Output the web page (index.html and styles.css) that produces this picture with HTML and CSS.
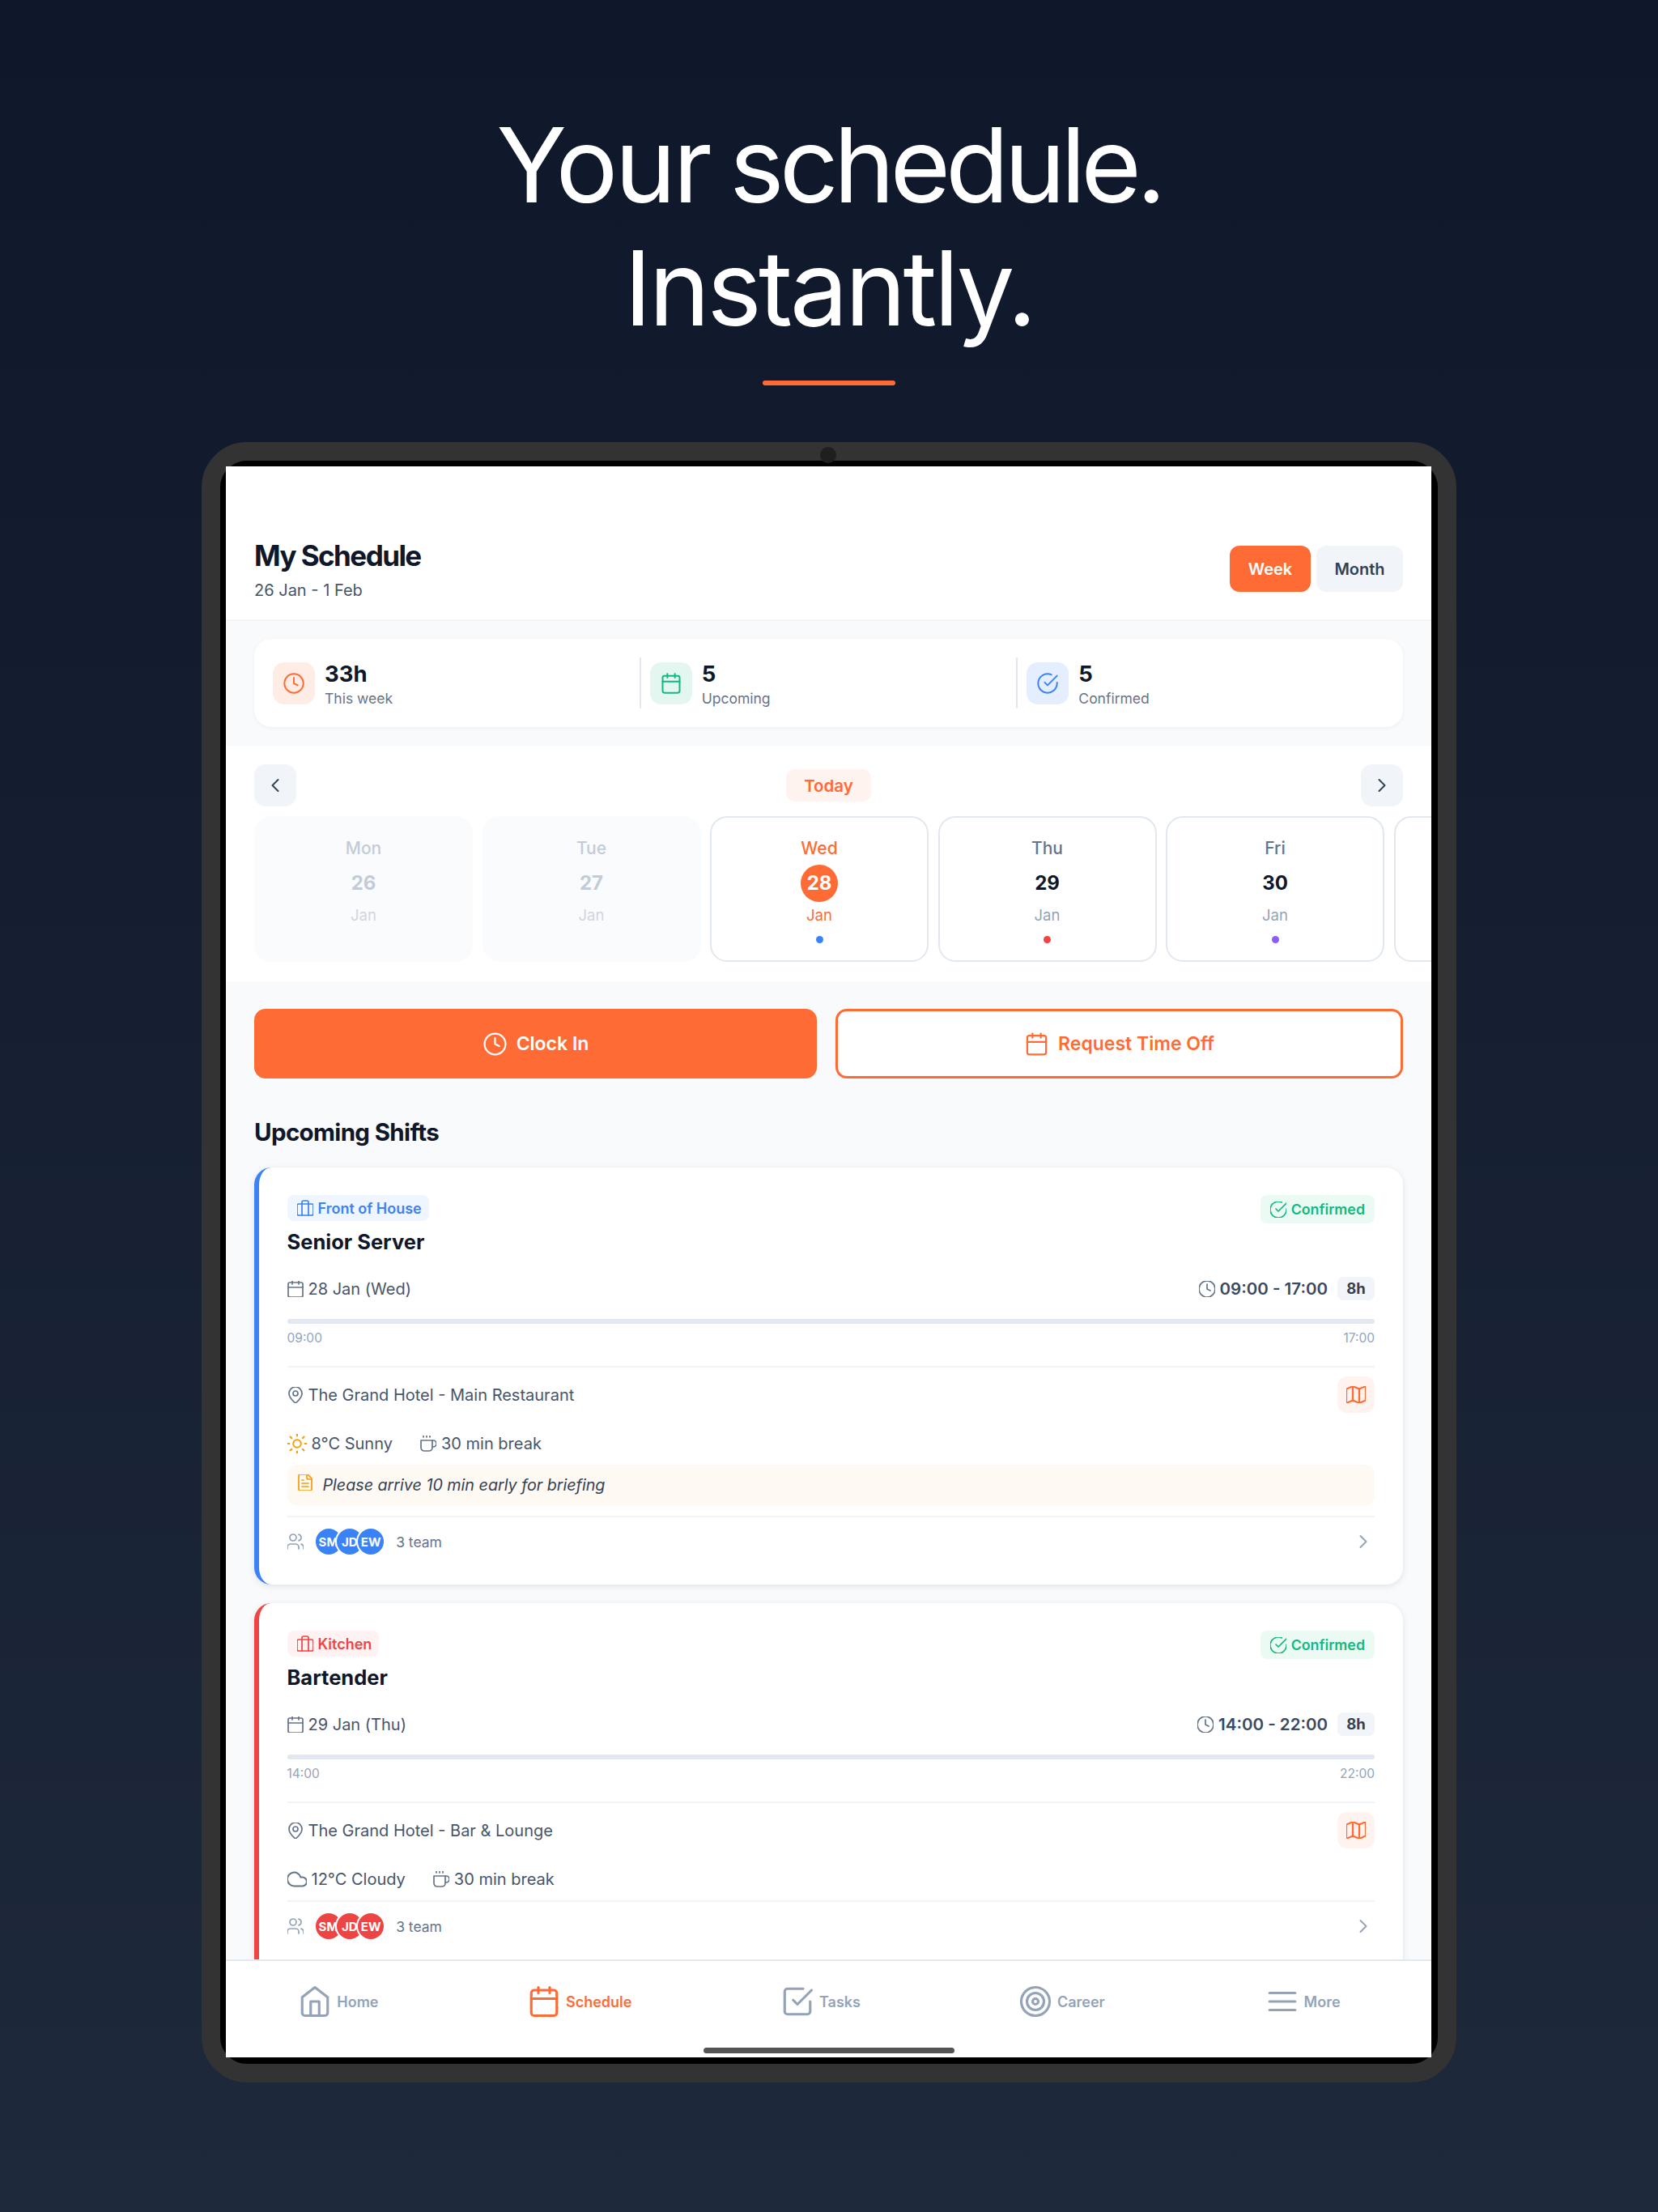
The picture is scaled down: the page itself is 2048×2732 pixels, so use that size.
FILE: index.html
```html
<!DOCTYPE html>
<html lang="en">
<head>
    <meta charset="UTF-8">
    <meta name="viewport" content="width=device-width, initial-scale=1.0">
    <title>Your schedule. Instantly.</title>
    <link rel="stylesheet" href="styles.css">
</head>
<body>
    <!-- icon set -->
    <svg class="sprite" xmlns="http://www.w3.org/2000/svg">
        <defs>
            <g id="i-clock"><circle cx="12" cy="12" r="10"/><polyline points="12 6 12 12 16 14"/></g>
            <g id="i-calendar"><rect x="3" y="4" width="18" height="18" rx="2"/><line x1="16" y1="2" x2="16" y2="6"/><line x1="8" y1="2" x2="8" y2="6"/><line x1="3" y1="10" x2="21" y2="10"/></g>
            <g id="i-check"><path d="M22 11.08V12a10 10 0 1 1-5.93-9.14"/><polyline points="22 4 12 14.01 9 11.01"/></g>
            <g id="i-left"><polyline points="15 18 9 12 15 6"/></g>
            <g id="i-right"><polyline points="9 18 15 12 9 6"/></g>
            <g id="i-case"><rect x="2" y="7" width="20" height="14" rx="2"/><path d="M16 21V5a2 2 0 0 0-2-2h-4a2 2 0 0 0-2 2v16"/></g>
            <g id="i-pin"><path d="M20 10c0 6-8 12-8 12s-8-6-8-12a8 8 0 0 1 16 0Z"/><circle cx="12" cy="10" r="3"/></g>
            <g id="i-sun"><circle cx="12" cy="12" r="4"/><path d="M12 2v2M12 20v2M4.93 4.93l1.41 1.41M17.66 17.66l1.41 1.41M2 12h2M20 12h2M6.34 17.66l-1.41 1.41M19.07 4.93l-1.41 1.41"/></g>
            <g id="i-cloud"><path d="M17.5 19H9a7 7 0 1 1 6.71-9h1.79a4.5 4.5 0 1 1 0 9Z"/></g>
            <g id="i-coffee"><path d="M17 8h1a4 4 0 1 1 0 8h-1"/><path d="M3 8h14v9a4 4 0 0 1-4 4H7a4 4 0 0 1-4-4Z"/><line x1="6" y1="2" x2="6" y2="4"/><line x1="10" y1="2" x2="10" y2="4"/><line x1="14" y1="2" x2="14" y2="4"/></g>
            <g id="i-map"><polygon points="3 6 9 3 15 6 21 3 21 18 15 21 9 18 3 21"/><line x1="9" y1="3" x2="9" y2="18"/><line x1="15" y1="6" x2="15" y2="21"/></g>
            <g id="i-note"><path d="M15 2H6a2 2 0 0 0-2 2v16a2 2 0 0 0 2 2h12a2 2 0 0 0 2-2V7Z"/><path d="M14 2v4a2 2 0 0 0 2 2h4"/><path d="M10 9H8"/><path d="M16 13H8"/><path d="M16 17H8"/></g>
            <g id="i-users"><path d="M16 21v-2a4 4 0 0 0-4-4H6a4 4 0 0 0-4 4v2"/><circle cx="9" cy="7" r="4"/><path d="M22 21v-2a4 4 0 0 0-3-3.87"/><path d="M16 3.13a4 4 0 0 1 0 7.75"/></g>
            <g id="i-home"><path d="M3 9l9-7 9 7v11a2 2 0 0 1-2 2H5a2 2 0 0 1-2-2z"/><polyline points="9 22 9 12 15 12 15 22"/></g>
            <g id="i-task"><polyline points="9 11 12 14 22 4"/><path d="M21 12v7a2 2 0 0 1-2 2H5a2 2 0 0 1-2-2V5a2 2 0 0 1 2-2h11"/></g>
            <g id="i-target"><circle cx="12" cy="12" r="10"/><circle cx="12" cy="12" r="6"/><circle cx="12" cy="12" r="2"/></g>
            <g id="i-menu"><line x1="3" y1="6" x2="21" y2="6"/><line x1="3" y1="12" x2="21" y2="12"/><line x1="3" y1="18" x2="21" y2="18"/></g>
        </defs>
    </svg>

    <!-- headline -->
    <h1 class="headline">Your <span class="tight">schedule.</span><br>Instantly.</h1>
    <div class="accent"></div>

    <!-- tablet -->
    <div class="device">
        <span class="camera"></span>
        <div class="screen">
            <header class="topbar">
                <div>
                    <h2 class="page-title">My Schedule</h2>
                    <p class="page-sub">26 Jan - 1 Feb</p>
                </div>
                <div class="view-toggle">
                    <button class="view-btn active">Week</button>
                    <button class="view-btn">Month</button>
                </div>
            </header>

            <main class="content">
                <section class="stats-band">
                    <div class="stats-card">
                        <div class="stat">
                            <span class="stat-icon orange"><svg class="ic stat-svg" viewBox="0 0 24 24"><use href="#i-clock"/></svg></span>
                            <div><div class="stat-value">33h</div><div class="stat-label">This week</div></div>
                        </div>
                        <span class="stat-divider"></span>
                        <div class="stat">
                            <span class="stat-icon green"><svg class="ic stat-svg" viewBox="0 0 24 24"><use href="#i-calendar"/></svg></span>
                            <div><div class="stat-value">5</div><div class="stat-label">Upcoming</div></div>
                        </div>
                        <span class="stat-divider"></span>
                        <div class="stat">
                            <span class="stat-icon blue"><svg class="ic stat-svg" viewBox="0 0 24 24"><use href="#i-check"/></svg></span>
                            <div><div class="stat-value">5</div><div class="stat-label">Confirmed</div></div>
                        </div>
                    </div>
                </section>

                <section class="calendar">
                    <div class="cal-nav">
                        <button class="cal-arrow"><svg class="ic chevron" viewBox="0 0 24 24"><use href="#i-left"/></svg></button>
                        <span class="today-pill">Today</span>
                        <button class="cal-arrow"><svg class="ic chevron" viewBox="0 0 24 24"><use href="#i-right"/></svg></button>
                    </div>
                    <div class="days">
                        <div class="day past"><span class="day-name">Mon</span><span class="day-num">26</span><span class="day-month">Jan</span></div>
                        <div class="day past"><span class="day-name">Tue</span><span class="day-num">27</span><span class="day-month">Jan</span></div>
                        <div class="day today"><span class="day-name">Wed</span><span class="day-num">28</span><span class="day-month">Jan</span><span class="day-dot dot-blue"></span></div>
                        <div class="day"><span class="day-name">Thu</span><span class="day-num">29</span><span class="day-month">Jan</span><span class="day-dot dot-red"></span></div>
                        <div class="day"><span class="day-name">Fri</span><span class="day-num">30</span><span class="day-month">Jan</span><span class="day-dot dot-purple"></span></div>
                        <div class="day"></div>
                    </div>
                </section>

                <section class="shifts">
                    <div class="actions">
                        <button class="action primary"><svg class="ic action-svg" viewBox="0 0 24 24"><use href="#i-clock"/></svg>Clock In</button>
                        <button class="action outline"><svg class="ic action-svg" viewBox="0 0 24 24"><use href="#i-calendar"/></svg>Request Time Off</button>
                    </div>

                    <h3 class="section-title">Upcoming Shifts</h3>

                    <article class="shift-card foh">
                        <div class="shift-head">
                            <div>
                                <span class="dept"><svg class="ic small" viewBox="2 2 20 20"><use href="#i-case"/></svg>Front of House</span>
                                <h4 class="role">Senior Server</h4>
                            </div>
                            <span class="status"><svg class="ic small" viewBox="2 2 20 20"><use href="#i-check"/></svg>Confirmed</span>
                        </div>
                        <div class="when">
                            <span class="info"><svg class="ic small" viewBox="2 2 20 20"><use href="#i-calendar"/></svg>28 Jan (Wed)</span>
                            <div class="hours">
                                <span class="time"><svg class="ic small" viewBox="2 2 20 20"><use href="#i-clock"/></svg>09:00 - 17:00</span>
                                <span class="duration">8h</span>
                            </div>
                        </div>
                        <div class="bar"></div>
                        <div class="bar-labels"><span>09:00</span><span>17:00</span></div>
                        <div class="place">
                            <span class="info"><svg class="ic small" viewBox="2 2 20 20"><use href="#i-pin"/></svg>The Grand Hotel - Main Restaurant</span>
                            <button class="map-btn"><svg class="ic map-svg" viewBox="3 3 18 18" preserveAspectRatio="none"><use href="#i-map"/></svg></button>
                        </div>
                        <div class="extras">
                            <span class="info"><svg class="ic weather sunny" viewBox="2 2 20 20"><use href="#i-sun"/></svg>8°C Sunny</span>
                            <span class="info"><svg class="ic small" viewBox="2 2 20 20"><use href="#i-coffee"/></svg>30 min break</span>
                        </div>
                        <div class="note"><svg class="ic small" viewBox="2 2 20 20"><use href="#i-note"/></svg><em>Please arrive 10 min early for briefing</em></div>
                        <div class="shift-foot">
                            <svg class="ic small team-icon" viewBox="2 2 20 20"><use href="#i-users"/></svg>
                            <div class="avatars"><span>SM</span><span>JD</span><span>EW</span></div>
                            <span class="team-count">3 team</span>
                            <svg class="ic chevron go" viewBox="0 0 24 24"><use href="#i-right"/></svg>
                        </div>
                    </article>

                    <article class="shift-card kitchen">
                        <div class="shift-head">
                            <div>
                                <span class="dept"><svg class="ic small" viewBox="2 2 20 20"><use href="#i-case"/></svg>Kitchen</span>
                                <h4 class="role">Bartender</h4>
                            </div>
                            <span class="status"><svg class="ic small" viewBox="2 2 20 20"><use href="#i-check"/></svg>Confirmed</span>
                        </div>
                        <div class="when">
                            <span class="info"><svg class="ic small" viewBox="2 2 20 20"><use href="#i-calendar"/></svg>29 Jan (Thu)</span>
                            <div class="hours">
                                <span class="time"><svg class="ic small" viewBox="2 2 20 20"><use href="#i-clock"/></svg>14:00 - 22:00</span>
                                <span class="duration">8h</span>
                            </div>
                        </div>
                        <div class="bar"></div>
                        <div class="bar-labels"><span>14:00</span><span>22:00</span></div>
                        <div class="place">
                            <span class="info"><svg class="ic small" viewBox="2 2 20 20"><use href="#i-pin"/></svg>The Grand Hotel - Bar &amp; Lounge</span>
                            <button class="map-btn"><svg class="ic map-svg" viewBox="3 3 18 18" preserveAspectRatio="none"><use href="#i-map"/></svg></button>
                        </div>
                        <div class="extras">
                            <span class="info"><svg class="ic weather" viewBox="2 2 20 20"><use href="#i-cloud"/></svg>12°C Cloudy</span>
                            <span class="info"><svg class="ic small" viewBox="2 2 20 20"><use href="#i-coffee"/></svg>30 min break</span>
                        </div>
                        <div class="shift-foot">
                            <svg class="ic small team-icon" viewBox="2 2 20 20"><use href="#i-users"/></svg>
                            <div class="avatars"><span>SM</span><span>JD</span><span>EW</span></div>
                            <span class="team-count">3 team</span>
                            <svg class="ic chevron go" viewBox="0 0 24 24"><use href="#i-right"/></svg>
                        </div>
                    </article>
                </section>
            </main>

            <nav class="tabbar">
                <a class="tab"><svg class="ic tab-svg" viewBox="0 0 24 24"><use href="#i-home"/></svg>Home</a>
                <a class="tab active"><svg class="ic tab-svg" viewBox="0 0 24 24"><use href="#i-calendar"/></svg>Schedule</a>
                <a class="tab"><svg class="ic tab-svg" viewBox="0 0 24 24"><use href="#i-task"/></svg>Tasks</a>
                <a class="tab"><svg class="ic tab-svg" viewBox="0 0 24 24"><use href="#i-target"/></svg>Career</a>
                <a class="tab"><svg class="ic tab-svg" viewBox="0 0 24 24"><use href="#i-menu"/></svg>More</a>
            </nav>
            <span class="home-bar"></span>
        </div>
    </div>
</body>
</html>
```

FILE: styles.css
```css
* {
    box-sizing: border-box;
}

body {
    margin: 0;
    width: 2048px;
    height: 2732px;
    overflow: hidden;
    font-family: Inter, "Noto Sans", sans-serif;
    background: linear-gradient(180deg, #0f172a 0%, #1e293b 100%);
}

h1, h2, h3, h4, p {
    margin: 0;
}

button {
    font-family: inherit;
    border: none;
    padding: 0;
}

.sprite {
    display: none;
}

.ic {
    flex-shrink: 0;
    fill: none;
    stroke: currentColor;
    stroke-width: 1.7;
    stroke-linecap: round;
    stroke-linejoin: round;
}

.small {
    width: 20px;
    height: 20px;
}

/* headline */
.headline {
    padding-top: 128px;
    font-size: 128px;
    line-height: 152px;
    font-weight: 400;
    letter-spacing: -3.8px;
    word-spacing: -7px;
    color: #fff;
    text-align: center;
}

.tight {
    letter-spacing: -6px;
}

.accent {
    width: 164px;
    height: 6px;
    margin: 38px auto 70px;
    border-radius: 3px;
    background-color: #ff6b35;
}

/* tablet frame */
.device {
    position: relative;
    width: 1550px;
    height: 2026px;
    margin: 0 auto;
    padding: 7px 8px 8px 7px;
    border: 23px solid #333;
    border-radius: 56px;
    background-color: #000;
}

.camera {
    position: absolute;
    top: -17px;
    left: 741px;
    width: 20px;
    height: 20px;
    border-radius: 50%;
    background-color: #1f1f1f;
}

.screen {
    position: relative;
    display: flex;
    flex-direction: column;
    height: 1965px;
    overflow: hidden;
    background-color: #fff;
}

/* top bar */
.topbar {
    display: flex;
    justify-content: space-between;
    align-items: flex-start;
    flex-shrink: 0;
    height: 191px;
    padding: 89px 35px 0;
    border-bottom: 2px solid #f1f5f9;
}

.page-title {
    font-size: 35px;
    line-height: 42px;
    font-weight: 700;
    letter-spacing: -1.55px;
    color: #0f172a;
}

.page-sub {
    margin-top: 8px;
    font-size: 20px;
    line-height: 28px;
    color: #475569;
}

.view-toggle {
    display: flex;
    gap: 7px;
    margin-top: 9px;
}

.view-btn {
    height: 57px;
    width: 107px;
    border-radius: 12px;
    font-size: 20px;
    font-weight: 600;
    color: #334155;
    background-color: #f1f5f9;
}

.view-btn.active {
    width: 100px;
    color: #fff;
    background-color: #ff6b35;
}

.content {
    flex: 1;
    min-height: 0;
    overflow: hidden;
    background-color: #f8fafc;
}

/* stats */
.stats-band {
    padding: 22px 35px 23px;
}

.stats-card {
    display: flex;
    align-items: center;
    gap: 11px;
    height: 109px;
    padding: 0 23px;
    border-radius: 21px;
    background-color: #fff;
    box-shadow: 0 1px 4px rgba(15, 23, 42, 0.06);
}

.stat {
    display: flex;
    align-items: center;
    gap: 12px;
    flex: 1;
}

.stat-divider {
    width: 2px;
    height: 63px;
    background-color: #e2e8f0;
}

.stat-icon {
    display: flex;
    align-items: center;
    justify-content: center;
    width: 52px;
    height: 52px;
    border-radius: 14px;
}

.stat-svg {
    width: 28px;
    height: 28px;
}

.orange {
    color: #ff6b35;
    background-color: #ffece5;
}

.green {
    color: #10b981;
    background-color: #e3f7f0;
}

.blue {
    color: #3b82f6;
    background-color: #e4eefe;
}

.stat-value {
    padding-top: 1px;
    font-size: 27.5px;
    line-height: 36px;
    font-weight: 700;
    color: #0f172a;
}

.stat-label {
    margin-top: 1px;
    font-size: 17.5px;
    line-height: 24px;
    color: #64748b;
}

/* calendar strip */
.calendar {
    padding: 23px 0 24px 35px;
    overflow: hidden;
    background-color: #fff;
}

.cal-nav {
    display: flex;
    justify-content: space-between;
    align-items: center;
    margin-right: 35px;
}

.cal-arrow {
    display: flex;
    align-items: center;
    justify-content: center;
    width: 52px;
    height: 52px;
    border-radius: 14px;
    color: #334155;
    background-color: #f1f5f9;
}

.chevron {
    width: 28px;
    height: 28px;
}

.today-pill {
    width: 105px;
    height: 40px;
    border-radius: 10px;
    font-size: 20.5px;
    line-height: 42px;
    font-weight: 600;
    text-align: center;
    color: #ff6b35;
    background-color: #fff3ef;
}

.days {
    display: flex;
    gap: 11.5px;
    margin-top: 12px;
}

.day {
    display: flex;
    flex-direction: column;
    align-items: center;
    flex-shrink: 0;
    width: 270px;
    height: 180px;
    padding-top: 24.5px;
    border: 2px solid #e2e8f0;
    border-radius: 21px;
    background-color: #fff;
}

.day-name {
    font-size: 21px;
    line-height: 25px;
    font-weight: 500;
    color: #64748b;
}

.day-num {
    display: flex;
    align-items: center;
    justify-content: center;
    width: 46px;
    height: 46px;
    margin-top: 8px;
    border-radius: 50%;
    font-size: 24px;
    font-weight: 700;
    color: #0f172a;
}

.day-month {
    margin-top: 5.5px;
    font-size: 18.5px;
    line-height: 22px;
    color: #94a3b8;
}

.day-dot {
    width: 9px;
    height: 9px;
    margin-top: 15px;
    border-radius: 50%;
}

.dot-blue {
    background-color: #3b82f6;
}

.dot-red {
    background-color: #ef4444;
}

.dot-purple {
    background-color: #8b5cf6;
}

.past {
    border-color: #fafbfd;
    background-color: #fafbfd;
}

.past .day-name, .past .day-num {
    color: #c4cbd8;
}

.past .day-month {
    color: #d0d5df;
}

.today .day-name, .today .day-month {
    color: #ff6b35;
}

.today .day-num {
    color: #fff;
    background-color: #ff6b35;
}

/* shifts */
.shifts {
    padding: 34px 35px 0;
}

.actions {
    display: flex;
    gap: 23px;
}

.action {
    display: flex;
    align-items: center;
    justify-content: center;
    gap: 11px;
    height: 86px;
    border-radius: 14px;
    font-size: 23px;
    font-weight: 600;
}

.action.primary {
    flex: none;
    width: 695px;
    color: #fff;
    background-color: #ff6b35;
}

.action.outline {
    flex: 1;
    color: #ff6b35;
    background-color: #fff;
    border: 3px solid #ff6b35;
}

.action-svg {
    width: 31px;
    height: 31px;
}

.section-title {
    margin: 48px 0 26px;
    font-size: 29.5px;
    line-height: 36px;
    font-weight: 700;
    letter-spacing: -0.65px;
    color: #0f172a;
}

.shift-card {
    height: 515px;
    margin-bottom: 23px;
    padding: 34px 35px 0 34.5px;
    border-left: 6px solid #3b82f6;
    border-radius: 21px;
    background-color: #fff;
    box-shadow: 0 2px 8px rgba(15, 23, 42, 0.1);
}

.kitchen {
    border-left-color: #ef4444;
}

.shift-head {
    display: flex;
    justify-content: space-between;
    align-items: flex-start;
}

.dept {
    display: inline-flex;
    align-items: center;
    gap: 6px;
    height: 32px;
    padding: 0 9px 0 12px;
    border-radius: 8px;
    font-size: 18px;
    font-weight: 600;
    color: #3b82f6;
    background-color: #eff6ff;
    vertical-align: top;
}

.kitchen .dept {
    color: #ef4444;
    background-color: #fef2f2;
}

.role {
    margin-top: 10px;
    font-size: 25.5px;
    line-height: 32px;
    font-weight: 700;
    color: #0f172a;
}

.status {
    display: inline-flex;
    align-items: center;
    gap: 6px;
    height: 35px;
    padding: 0 12px;
    border-radius: 8px;
    font-size: 17.8px;
    font-weight: 600;
    color: #10b981;
    background-color: #ecfaf4;
}

.when {
    display: flex;
    justify-content: space-between;
    align-items: center;
    margin-top: 27px;
}

.info {
    display: inline-flex;
    align-items: center;
    gap: 6px;
    font-size: 20px;
    line-height: 26px;
    color: #475569;
}

.info .small {
    color: #64748b;
}

.hours {
    display: flex;
    align-items: center;
    gap: 12px;
}

.time {
    display: inline-flex;
    align-items: center;
    gap: 6px;
    font-size: 20.5px;
    font-weight: 600;
    color: #3b4a60;
}

.time .small {
    color: #64748b;
}

.duration {
    width: 46px;
    height: 29px;
    border-radius: 7px;
    font-size: 18.5px;
    line-height: 29px;
    font-weight: 700;
    text-align: center;
    color: #334155;
    background-color: #f1f5f9;
}

.bar {
    height: 6px;
    margin-top: 23px;
    border-radius: 3px;
    background-color: #e2e8f0;
}

.bar-labels {
    display: flex;
    justify-content: space-between;
    margin-top: 9px;
    font-size: 15.5px;
    line-height: 18px;
    color: #94a3b8;
}

.place {
    display: flex;
    justify-content: space-between;
    align-items: center;
    margin-top: 25px;
    padding-top: 11px;
    border-top: 2px solid #f1f5f9;
}

.map-btn {
    display: flex;
    align-items: center;
    justify-content: center;
    width: 46px;
    height: 45px;
    border-radius: 12px;
    color: #ff6b35;
    background-color: #fff3ef;
}

.map-svg {
    width: 24px;
    height: 21px;
}

.extras {
    display: flex;
    gap: 34px;
    margin-top: 25px;
}

.weather {
    width: 24px;
    height: 24px;
    color: #64748b;
}

.sunny {
    color: #f59e0b;
}

.note {
    display: flex;
    align-items: flex-start;
    gap: 12px;
    height: 51px;
    margin-top: 13px;
    padding: 12px 12px 0;
    border-radius: 12px;
    color: #f59e0b;
    background-color: #fff9f3;
}

.note em {
    font-size: 19.7px;
    line-height: 27px;
    color: #334155;
}

.shift-foot {
    display: flex;
    align-items: center;
    margin-top: 13px;
    padding-top: 12px;
    border-top: 2px solid #f1f5f9;
}

.note + .shift-foot {
    margin-top: 12px;
}

.team-icon {
    color: #94a3b8;
}

.avatars {
    display: flex;
    margin-left: 13px;
    color: #fff;
}

.avatars span {
    display: flex;
    align-items: center;
    justify-content: center;
    width: 36px;
    height: 36px;
    border: 2px solid #fff;
    border-radius: 50%;
    font-size: 15px;
    font-weight: 700;
    background-color: #3b82f6;
}

.avatars span + span {
    margin-left: -9.7px;
}

.kitchen .avatars span {
    background-color: #ef4444;
}

.team-count {
    margin-left: 13px;
    font-size: 17.5px;
    color: #64748b;
}

.go {
    margin-left: auto;
    color: #94a3b8;
}

/* bottom nav */
.tabbar {
    display: flex;
    flex-shrink: 0;
    height: 121px;
    padding-top: 29px;
    border-top: 2px solid #e2e8f0;
    background-color: #fff;
}

.tab {
    display: flex;
    align-items: center;
    justify-content: center;
    gap: 6px;
    flex: 1;
    height: 42px;
    padding-right: 20px;
    font-size: 18px;
    font-weight: 600;
    color: #94a3b8;
}

.tab.active {
    color: #ff6b35;
}

.tab-svg {
    width: 42px;
    height: 42px;
    stroke-width: 1.8;
}

.home-bar {
    position: absolute;
    bottom: 5px;
    left: 590px;
    width: 310px;
    height: 7px;
    border-radius: 4px;
    background-color: #555;
}
```
